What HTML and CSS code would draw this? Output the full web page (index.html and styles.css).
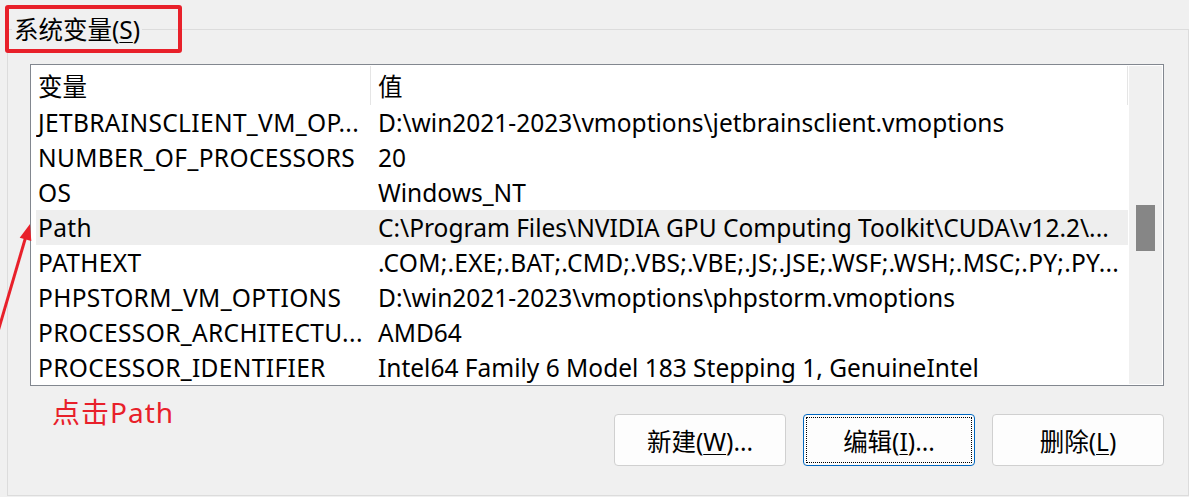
FILE: index.html
```html
<!DOCTYPE html>
<html lang="zh-CN">
<head>
<meta charset="utf-8">
<title>系统变量</title>
<link rel="stylesheet" href="styles.css">
</head>
<body>
<div class="group">
  <div class="group-title">系统变量(<u>S</u>)</div>
  <div class="listbox">
    <div class="table">
      <div class="row head"><div class="c1">变量</div><div class="c2">值</div></div>
      <div class="row"><div class="c1">JETBRAINSCLIENT_VM_OP...</div><div class="c2">D:\win2021-2023\vmoptions\jetbrainsclient.vmoptions</div></div>
      <div class="row"><div class="c1">NUMBER_OF_PROCESSORS</div><div class="c2">20</div></div>
      <div class="row"><div class="c1">OS</div><div class="c2">Windows_NT</div></div>
      <div class="row sel"><div class="c1">Path</div><div class="c2">C:\Program Files\NVIDIA GPU Computing Toolkit\CUDA\v12.2\...</div></div>
      <div class="row"><div class="c1">PATHEXT</div><div class="c2 caps">.COM;.EXE;.BAT;.CMD;.VBS;.VBE;.JS;.JSE;.WSF;.WSH;.MSC;.PY;.PY...</div></div>
      <div class="row"><div class="c1">PHPSTORM_VM_OPTIONS</div><div class="c2">D:\win2021-2023\vmoptions\phpstorm.vmoptions</div></div>
      <div class="row"><div class="c1">PROCESSOR_ARCHITECTU...</div><div class="c2">AMD64</div></div>
      <div class="row"><div class="c1">PROCESSOR_IDENTIFIER</div><div class="c2">Intel64 Family 6 Model 183 Stepping 1, GenuineIntel</div></div>
    </div>
    <div class="vscroll"><div class="thumb"></div></div>
  </div>
  <div class="actions">
    <button class="btn">新建(<u>W</u>)...</button>
    <button class="btn focus">编辑(<u>I</u>)...</button>
    <button class="btn">删除(<u>L</u>)</button>
  </div>
</div>

<div class="note-box"></div>
<svg class="note-arrow" width="40" height="140" viewBox="0 200 40 140">
  <line x1="-3" y1="335" x2="26" y2="236" stroke="#e8202a" stroke-width="3"/>
  <polygon points="30,224 19.7,237.7 31.3,241.1" fill="#e8202a"/>
</svg>
<div class="note-text">点击Path</div>
</body>
</html>
```

FILE: styles.css
```css
html, body {
  margin: 0;
}

body {
  box-sizing: border-box;
  width: 1189px;
  height: 497px;
  padding: 29px 0 0 7px;
  background: #f0f0f0;
  font-family: "Noto Sans", "Noto Sans CJK SC", sans-serif;
  font-size: 24.5px;
  color: #000;
  position: relative;
  overflow: hidden;
}

.group {
  box-sizing: border-box;
  width: 1182px;
  height: 467px;
  border: 1px solid #dcdcdc;
  padding: 0 24px 0 22px;
}

.group-title {
  width: fit-content;
  margin: -16px 0 0 -18px;
  padding: 0 2px;
  background: #f0f0f0;
  line-height: 32px;
}

.group-title u,
.btn u {
  text-underline-offset: 3px;
  text-decoration-thickness: 1px;
}

.listbox {
  box-sizing: border-box;
  margin-top: 18px;
  height: 322px;
  border: 1px solid #82878f;
  padding: 1px;
  background: #fff;
  display: flex;
}

.table {
  flex: 1;
  min-width: 0;
  padding-left: 4px;
  overflow: hidden;
}

.row {
  display: grid;
  grid-template-columns: 334px 1fr;
  height: 35px;
  line-height: 35px;
  white-space: nowrap;
}

.row > div {
  overflow: hidden;
}

.c1 {
  padding-left: 2px;
  letter-spacing: 0.35px;
}

.c2 {
  padding-left: 8px;
}

.c2.caps {
  letter-spacing: 0.25px;
}

.head {
  height: 39px;
  line-height: 41px;
  border-right: 1px solid #e5e5e5;
  margin-right: 1px;
}

.head .c1 {
  letter-spacing: 0;
}

.head .c2 {
  border-left: 1px solid #e5e5e5;
  padding-left: 7px;
}

.sel {
  background: #eeeeee;
  margin-right: 1px;
}

.vscroll {
  width: 33px;
  background: #f0f0f0;
}

.thumb {
  margin: 139px 0 0 7px;
  width: 19px;
  height: 46px;
  background: #868686;
}

.actions {
  display: flex;
  justify-content: flex-end;
  gap: 17px;
  margin-top: 28px;
}

.btn {
  box-sizing: border-box;
  width: 172px;
  height: 52px;
  padding: 0;
  border: 1px solid #d0d0d0;
  border-radius: 4px;
  background: #fdfdfd;
  font: inherit;
  color: #000;
  position: relative;
}

.btn.focus {
  border-color: #0067c0;
}

.btn.focus::after {
  content: "";
  position: absolute;
  inset: 2px;
  border: 1px dotted #000;
}

.note-box {
  position: absolute;
  left: 5px;
  top: 5px;
  box-sizing: border-box;
  width: 177px;
  height: 48px;
  border: 4px solid #e8202a;
  border-radius: 3px;
}

.note-arrow {
  position: absolute;
  left: 0;
  top: 200px;
}

.note-text {
  position: absolute;
  left: 52px;
  top: 394px;
  color: #e8202a;
  font-size: 28px;
  letter-spacing: 1px;
  line-height: 36px;
}
```
